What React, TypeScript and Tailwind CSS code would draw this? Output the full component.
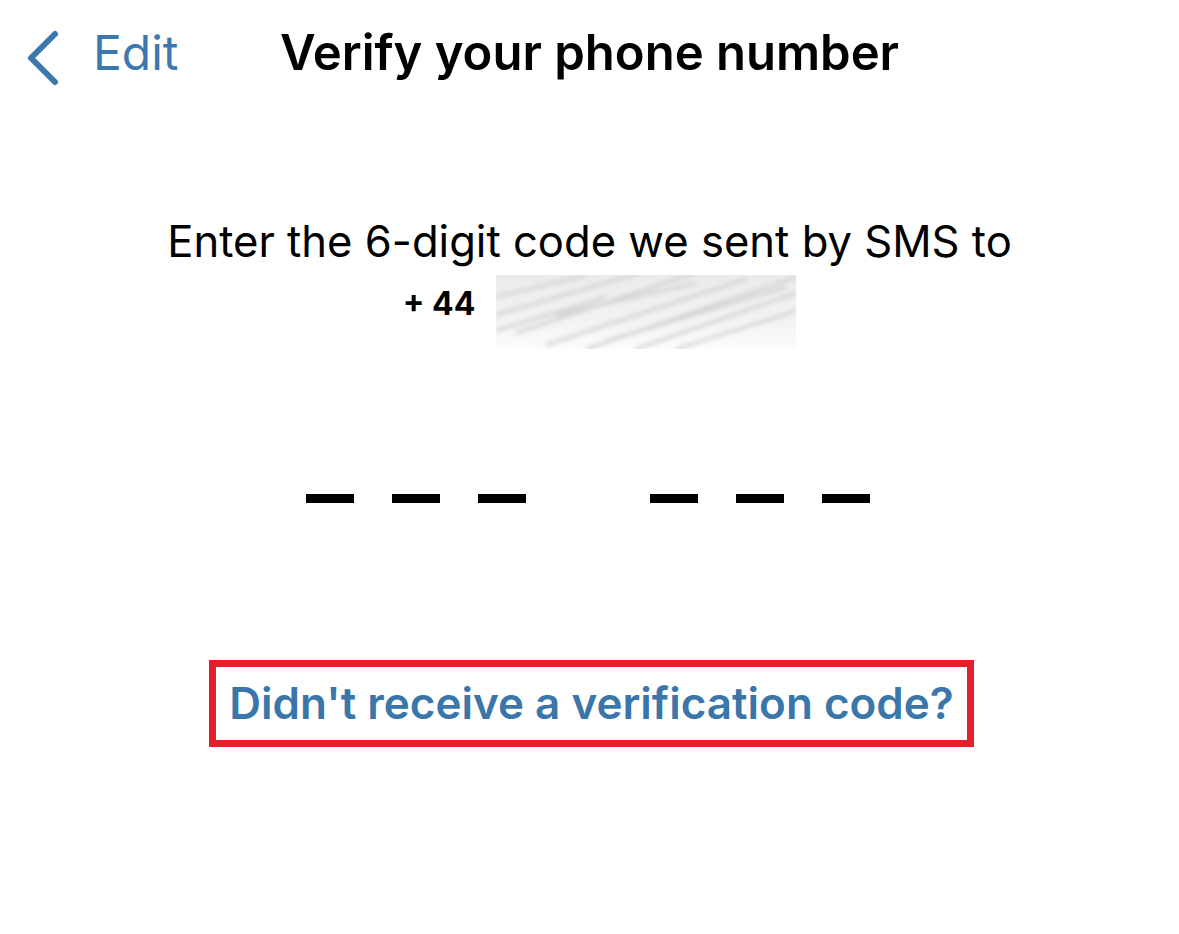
const font = { fontFamily: "Inter, 'Noto Sans', sans-serif" };

function BackChevron() {
  return (
    <svg width="40" height="60" viewBox="0 0 40 60" fill="none" className="block">
      <polyline
        points="31,6 7,30 31,54"
        stroke="currentColor"
        strokeWidth="6"
        strokeLinecap="round"
        strokeLinejoin="round"
      />
    </svg>
  );
}

function BlurredNumber() {
  // smudged scribble that hides the rest of the number
  const lines = [
    [0, 22, 90, 0],
    [0, 40, 150, -4],
    [20, 58, 210, -6],
    [50, 70, 250, 4],
    [90, 74, 300, 2],
    [140, 74, 300, 18],
    [0, 56, 110, 22],
    [110, 66, 290, 12],
    [180, 74, 300, 36],
    [60, 40, 200, 8],
  ];
  return (
    <svg width="300" height="74" viewBox="0 0 300 74" className="block">
      <defs>
        <filter id="smudge">
          <feGaussianBlur stdDeviation="2" />
        </filter>
        <linearGradient id="fade" x1="0" y1="0" x2="0" y2="1">
          <stop offset="0" stopColor="#ebebeb" />
          <stop offset="0.6" stopColor="#f2f2f2" />
          <stop offset="1" stopColor="#fcfcfc" />
        </linearGradient>
      </defs>
      <rect width="300" height="74" fill="url(#fade)" />
      <g filter="url(#smudge)" stroke="#cdcdcd" strokeWidth="3" opacity="0.85">
        {lines.map(([x1, y1, x2, y2], i) => (
          <line key={i} x1={x1} y1={y1} x2={x2} y2={y2} />
        ))}
      </g>
    </svg>
  );
}

function Dashes() {
  return (
    <div className="flex gap-[38px]">
      {[0, 1, 2].map((i) => (
        <div key={i} className="w-[48px] h-[9px] bg-black" />
      ))}
    </div>
  );
}

export default function App() {
  return (
    <div className="w-[1179px] h-[934px] bg-white text-black" style={font}>
      {/* Nav bar */}
      <div className="grid grid-cols-[1fr_auto_1fr] items-start h-[110px] pt-[28px]">
        <div className="flex items-start pl-[24px] text-[#3c78ae]">
          <BackChevron />
          <span className="ml-[29px] mt-[1px] text-[48px] leading-none">Edit</span>
        </div>
        <h1 className="text-[49px] font-semibold leading-none">Verify your phone number</h1>
        <div />
      </div>

      {/* Message */}
      <div className="flex flex-col items-center mt-[110px]">
        <p className="text-[43.6px] leading-[44px]">Enter the 6-digit code we sent by SMS to</p>
        <div className="flex items-start mt-[11px] translate-x-[10px]">
          <span className="text-[32px] font-bold leading-none mt-[13px] mr-[21px]">+ 44</span>
          <BlurredNumber />
        </div>
      </div>

      {/* Code entry */}
      <div className="flex justify-center gap-[124px] mt-[145px] pr-[4px]">
        <Dashes />
        <Dashes />
      </div>

      {/* Resend link */}
      <div className="flex justify-center mt-[157px] pl-[4px]">
        <div className="border-[7px] border-[#e61f2b] px-[13px] py-[11px]">
          <span className="text-[44px] font-semibold text-[#3a76aa] leading-[51px] whitespace-nowrap">
            Didn't receive a verification code?
          </span>
        </div>
      </div>
    </div>
  );
}
